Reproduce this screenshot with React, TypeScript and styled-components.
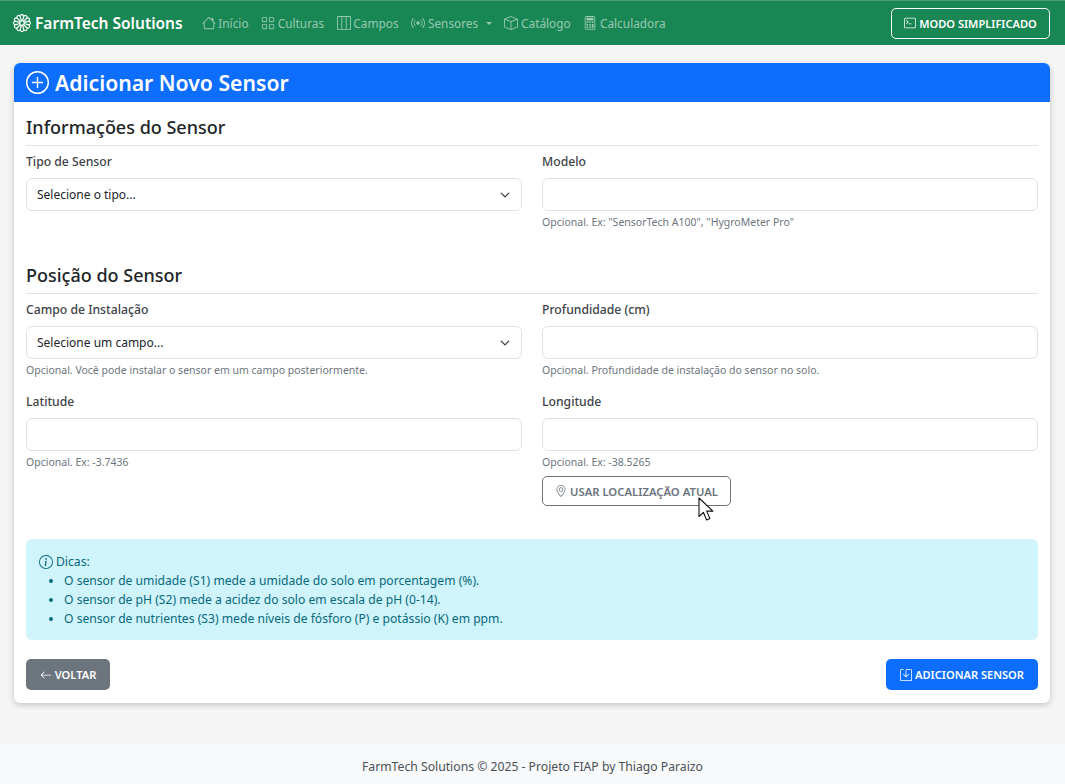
import styled, { createGlobalStyle } from 'styled-components'
import {
	BsArrowLeft,
	BsBox,
	BsBroadcast,
	BsCalculator,
	BsFlower1,
	BsGeoAlt,
	BsGrid,
	BsHouse,
	BsInfoCircle,
	BsLayoutThreeColumns,
	BsPlusCircle,
	BsSave,
	BsTerminal,
} from 'react-icons/bs'

const FONT = '"Noto Sans", "Open Sans", sans-serif'

const GlobalStyle = createGlobalStyle`
	html, body {
		margin: 0;
		padding: 0;
		background-color: #f5f5f5;
		font-family: ${FONT};
		color: #212529;
	}

	* {
		box-sizing: border-box;
	}
`

const navLinks = [
	{ label: 'Início', icon: <BsHouse /> },
	{ label: 'Culturas', icon: <BsGrid /> },
	{ label: 'Campos', icon: <BsLayoutThreeColumns /> },
	{ label: 'Sensores', icon: <BsBroadcast />, caret: true },
	{ label: 'Catálogo', icon: <BsBox /> },
	{ label: 'Calculadora', icon: <BsCalculator /> },
]

const tips = [
	'O sensor de umidade (S1) mede a umidade do solo em porcentagem (%).',
	'O sensor de pH (S2) mede a acidez do solo em escala de pH (0-14).',
	'O sensor de nutrientes (S3) mede níveis de fósforo (P) e potássio (K) em ppm.',
]

export default function App() {
	return (
		<Page>
			<GlobalStyle />

			<Navbar>
				<NavLeft>
					<Brand>
						<BsFlower1 />
						FarmTech Solutions
					</Brand>

					<NavLinks>
						{navLinks.map(link => (
							<NavLink key={link.label}>
								{link.icon}
								{link.label}
								{link.caret && <Caret />}
							</NavLink>
						))}
					</NavLinks>
				</NavLeft>

				<SimpleModeButton>
					<BsTerminal />
					Modo Simplificado
				</SimpleModeButton>
			</Navbar>

			<Main>
				<Card>
					<CardHeader>
						<BsPlusCircle />
						Adicionar Novo Sensor
					</CardHeader>

					<CardBody>
						<SectionTitle>Informações do Sensor</SectionTitle>

						<FormRow>
							<Field>
								<Label>Tipo de Sensor</Label>
								<SelectBox>
									Selecione o tipo...
									<Chevron />
								</SelectBox>
							</Field>

							<Field>
								<Label>Modelo</Label>
								<Input />
								<Help>Opcional. Ex: "SensorTech A100", "HygroMeter Pro"</Help>
							</Field>
						</FormRow>

						<SectionTitle second>Posição do Sensor</SectionTitle>

						<FormRow>
							<Field>
								<Label>Campo de Instalação</Label>
								<SelectBox>
									Selecione um campo...
									<Chevron />
								</SelectBox>
								<Help>Opcional. Você pode instalar o sensor em um campo posteriormente.</Help>
							</Field>

							<Field>
								<Label>Profundidade (cm)</Label>
								<Input />
								<Help>Opcional. Profundidade de instalação do sensor no solo.</Help>
							</Field>

							<Field>
								<Label>Latitude</Label>
								<Input />
								<Help>Opcional. Ex: -3.7436</Help>
							</Field>

							<Field>
								<Label>Longitude</Label>
								<Input />
								<Help>Opcional. Ex: -38.5265</Help>
								<LocationButton>
									<BsGeoAlt />
									Usar Localização Atual
									<Cursor />
								</LocationButton>
							</Field>
						</FormRow>

						<Alert>
							<AlertTitle>
								<BsInfoCircle />
								Dicas:
							</AlertTitle>
							<TipList>
								{tips.map(tip => <li key={tip}>{tip}</li>)}
							</TipList>
						</Alert>

						<Actions>
							<BackButton>
								<BsArrowLeft />
								Voltar
							</BackButton>
							<SubmitButton>
								<BsSave />
								Adicionar Sensor
							</SubmitButton>
						</Actions>
					</CardBody>
				</Card>
			</Main>

			<Footer>FarmTech Solutions © 2025 - Projeto FIAP by Thiago Paraizo</Footer>
		</Page>
	)
}

function Caret() {
	return <CaretShape />
}

function Chevron() {
	return (
		<ChevronIcon viewBox='0 0 16 16'>
			<path fill='none' stroke='#343a40' strokeLinecap='round' strokeLinejoin='round' strokeWidth='2' d='m2 5 6 6 6-6' />
		</ChevronIcon>
	)
}

function Cursor() {
	return (
		<CursorIcon viewBox='0 0 17 25'>
			<path fill='#fff' stroke='#111' strokeWidth='1.1' strokeLinejoin='round' d='M1 1v18.5l4.4-4.2 3.2 7.7 3.3-1.4-3.2-7.5h6.2z' />
		</CursorIcon>
	)
}

const Page = styled.div`
	width: 1065px;
	height: 784px;
	overflow: hidden;
	display: flex;
	flex-direction: column;
`

const Navbar = styled.nav`
	height: 45px;
	flex-shrink: 0;
	background-color: #198754;
	border-top: 1px solid #4b9f78;
	padding: 0 15px 0 13px;
	display: flex;
	align-items: center;
	justify-content: space-between;
`

const NavLeft = styled.div`
	display: flex;
	align-items: center;
`

const Brand = styled.div`
	display: flex;
	align-items: center;
	gap: 4px;
	color: #fff;
	font-size: 15.5px;
	font-weight: 600;
	white-space: nowrap;

	svg {
		font-size: 18px;
	}
`

const NavLinks = styled.div`
	display: flex;
	align-items: center;
	gap: 12.6px;
	margin-left: 19px;
`

const NavLink = styled.div`
	display: flex;
	align-items: center;
	gap: 2.6px;
	color: rgba(255, 255, 255, 0.55);
	font-size: 11.85px;
	white-space: nowrap;

	svg {
		font-size: 14px;
	}
`

const CaretShape = styled.span`
	width: 0;
	height: 0;
	margin-left: 5px;
	border-top: 3.5px solid rgba(255, 255, 255, 0.55);
	border-left: 3.5px solid transparent;
	border-right: 3.5px solid transparent;
`

const BaseButton = styled.div`
	display: inline-flex;
	align-items: center;
	justify-content: center;
	gap: 3px;
	height: 31px;
	border-radius: 5px;
	font-size: 11.1px;
	font-weight: 600;
	text-transform: uppercase;
	white-space: nowrap;

	svg:first-child {
		font-size: 12px;
	}
`

const SimpleModeButton = styled(BaseButton)`
	width: 159px;
	color: #fff;
	border: 1px solid #fff;
`

const Main = styled.main`
	flex: 1;
	padding: 18px 15px 0 14px;
`

const Card = styled.section`
	background-color: #fff;
	border-radius: 6px;
	height: 640px;
	box-shadow: 0 2px 6px rgba(0, 0, 0, 0.2);
	overflow: hidden;
`

const CardHeader = styled.header`
	height: 39px;
	background-color: #0d6efd;
	padding: 0 12px;
	display: flex;
	align-items: center;
	gap: 6px;
	color: #fff;
	font-size: 21.2px;
	font-weight: 600;

	svg {
		font-size: 23px;
	}
`

const CardBody = styled.div`
	padding: 13px 12px 0;
`

const SectionTitle = styled.h5<{ second?: boolean }>`
	margin: ${({ second }) => second ? '33px' : '0'} 0 7px;
	padding-bottom: 5px;
	height: 31px;
	border-bottom: 1px solid #dee2e6;
	font-size: 18px;
	font-weight: 500;
	line-height: 24px;
`

const FormRow = styled.div`
	display: grid;
	grid-template-columns: 1fr 1fr;
	column-gap: 20px;
	row-gap: 15px;
`

const Field = styled.div`
	display: flex;
	flex-direction: column;
	align-items: flex-start;
`

const Label = styled.label`
	font-size: 12.2px;
	font-weight: 500;
	line-height: 17px;
	margin-bottom: 8px;
	color: #3d4349;
`

const Input = styled.div`
	width: 100%;
	height: 33px;
	background-color: #fff;
	border: 1px solid #dee2e6;
	border-radius: 6px;
`

const SelectBox = styled(Input)`
	display: flex;
	align-items: center;
	justify-content: space-between;
	padding: 0 11px 0 10px;
	font-size: 12px;
	color: #212529;
`

const ChevronIcon = styled.svg`
	width: 10px;
	height: 10px;
`

const Help = styled.small`
	margin-top: 4px;
	font-size: 10.5px;
	line-height: 15px;
	color: #6c757d;
`

const LocationButton = styled(BaseButton)`
	position: relative;
	width: 189px;
	height: 30px;
	margin-top: 6px;
	font-size: 11.3px;
	color: #6c757d;
	border: 1px solid #6c757d;
`

const CursorIcon = styled.svg`
	position: absolute;
	left: 155px;
	top: 20px;
	width: 17px;
	height: 25px;
`

const Alert = styled.div`
	height: 101px;
	margin-top: 33px;
	padding: 13px 13px;
	background-color: #cff4fc;
	border-radius: 6px;
	color: #08697b;
	font-size: 12.15px;
	line-height: 19px;
`

const AlertTitle = styled.div`
	display: flex;
	align-items: center;
	gap: 3px;

	svg {
		font-size: 14px;
	}
`

const TipList = styled.ul`
	margin: 0;
	padding-left: 25px;
`

const Actions = styled.div`
	display: flex;
	justify-content: space-between;
	margin-top: 19px;
`

const BackButton = styled(BaseButton)`
	width: 84px;
	color: #fff;
	background-color: #6c757d;
`

const SubmitButton = styled(BaseButton)`
	width: 152px;
	color: #fff;
	background-color: #0d6efd;
`

const Footer = styled.footer`
	height: 40px;
	flex-shrink: 0;
	padding-top: 4px;
	background-color: #f8f9fa;
	display: flex;
	align-items: center;
	justify-content: center;
	font-size: 12.2px;
	color: #495057;
`
